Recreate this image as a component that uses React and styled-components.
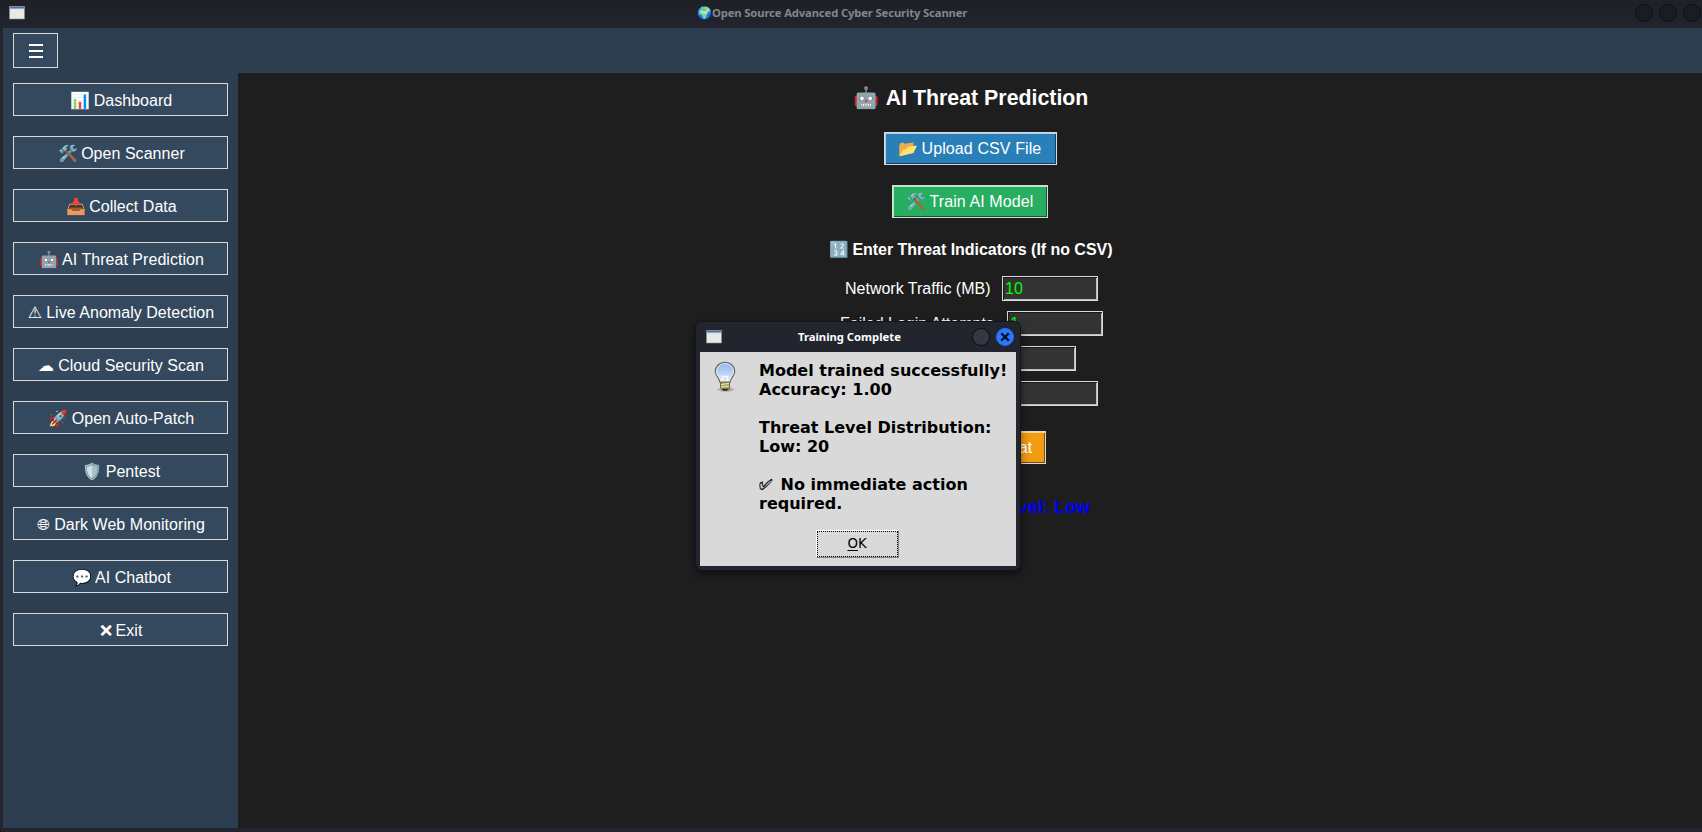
import React from "react";
import styled, { createGlobalStyle } from "styled-components";

const Global = createGlobalStyle`
  * { box-sizing: border-box; }
  html, body { margin: 0; background: #15161b; }
  body { font-family: "Liberation Sans", Arial, "DejaVu Sans", sans-serif; font-size: 16px; color: #fff; overflow: hidden; }
`;

const Window = styled.div`
  position: relative;
  width: 1702px;
  height: 832px;
  display: flex;
  flex-direction: column;
  padding: 0 0 4px 3px;
  background: #23252e;
  border-bottom-left-radius: 4px;
`;

const TitleBar = styled.header`
  display: grid;
  grid-template-columns: ${(p) => p.$lead}px auto 1fr;
  align-items: center;
  height: ${(p) => p.$height}px;
  margin-left: ${(p) => p.$shift || 0}px;
  padding: ${(p) => p.$pad};
  background: ${(p) => p.$bg};
  flex: none;
`;

const TitleText = styled.span`
  font: 700 11.25px/16px "Noto Sans", "Open Sans", sans-serif;
  color: ${(p) => p.$color};
  letter-spacing: ${(p) => p.$spacing}px;
  white-space: pre;
  display: flex;
  align-items: center;
`;

const Emoji = styled.span`
  font: ${(p) => p.$size}px/1 "Noto Color Emoji", sans-serif;
  letter-spacing: 0;
`;

const Controls = styled.div`
  display: flex;
  justify-content: flex-end;
  gap: 6px;
`;

const Round = styled.span`
  width: 18px;
  height: 18px;
  border-radius: 50%;
  border: 1px solid ${(p) => p.$ring};
  background: ${(p) => p.$bg};
  display: flex;
  align-items: center;
  justify-content: center;
`;

const Toolbar = styled.div`
  height: 45px;
  padding: 5px 10px;
  background: #2c3e50;
  flex: none;
`;

const MenuButton = styled.button`
  display: flex;
  align-items: center;
  justify-content: center;
  width: 45px;
  height: 35px;
  padding: 1px 0 0 1px;
  border: 1px solid #d9d9d9;
  background: #34495e;
`;

const Body = styled.div`
  display: flex;
  flex: 1;
`;

const Sidebar = styled.nav`
  width: 235px;
  padding: 10px;
  display: flex;
  flex-direction: column;
  gap: 20px;
  background: #2c3e50;
`;

const NavButton = styled.button`
  height: 33px;
  padding: 2px 0 0 ${(p) => (p.$mono ? 1 : 2)}px;
  display: flex;
  align-items: center;
  justify-content: center;
  gap: ${(p) => (p.$mono ? 4 : 3)}px;
  border: 1px solid #d9d9d9;
  background: #34495e;
  color: #fff;
  font: 16px/19px "Liberation Sans", sans-serif;
  letter-spacing: 0.04px;
  white-space: nowrap;
`;

const Glyph = styled.span`
  font: 16px/18px "DejaVu Sans", sans-serif;
`;

const Main = styled.main`
  flex: 1;
  display: flex;
  flex-direction: column;
  align-items: center;
  background: #1e1e1e;
`;

const Heading = styled.h1`
  margin: 13px 0 0;
  height: 24px;
  padding-left: 2px;
  display: flex;
  align-items: center;
  gap: 6px;
  font: bold 21.33px/24px "Liberation Sans", sans-serif;
`;

const ActionButton = styled.button`
  width: ${(p) => p.$width}px;
  height: 33px;
  margin-top: ${(p) => p.$top}px;
  padding: 0;
  display: flex;
  align-items: center;
  justify-content: center;
  gap: 3px;
  border: 1px solid #d9d9d9;
  background: ${(p) => p.$bg};
  box-shadow: inset 1px 1px 0 ${(p) => p.$light}, inset -1px -1px 0 ${(p) => p.$dark};
  color: #fff;
  font: 16px/18px "Liberation Sans", sans-serif;
  letter-spacing: 0.1px;
  white-space: nowrap;
`;

const Subheading = styled.h2`
  margin: 22px 0 16px;
  height: 20px;
  padding-left: 2px;
  display: flex;
  align-items: center;
  gap: 3px;
  font: bold 16px/20px "Liberation Sans", sans-serif;
  letter-spacing: -0.04px;
`;

const Fields = styled.div`
  display: flex;
  flex-direction: column;
  align-items: center;
  gap: 10px;
`;

const Field = styled.label`
  display: flex;
  align-items: center;
  height: 25px;
  width: ${(p) => p.$width}px;
  padding-left: 3px;
  justify-content: space-between;
  white-space: nowrap;
`;

const Input = styled.input`
  width: 96px;
  height: 25px;
  padding: 1px 0 0 2px;
  border: 1px solid #d9d9d9;
  box-shadow: inset 1px 1px 0 #1a1a1a, inset -1px -1px 0 #bdbdbd;
  border-radius: 0;
  outline: none;
  background: #333;
  color: #00ff00;
  font: 16px/18px "Liberation Sans", sans-serif;
`;

const Result = styled.p`
  margin: 33px 0 0;
  font: bold 18px/20px "Liberation Sans", sans-serif;
  color: #0000ff;
`;

const Dialog = styled.section`
  position: absolute;
  left: 696px;
  top: 322px;
  width: 324px;
  height: 248px;
  padding: 0 4px 4px;
  display: flex;
  flex-direction: column;
  border-radius: 6px;
  background: #23252e;
  box-shadow: 0 0 0 1px #14151a, 0 3px 10px rgba(0, 0, 0, 0.6);
`;

const DialogBody = styled.div`
  flex: 1;
  background: #d9d9d9;
  color: #000;
  display: flex;
  flex-direction: column;
  align-items: center;
`;

const Message = styled.div`
  align-self: stretch;
  display: flex;
  padding: 9px 0 0 9px;
  height: 178px;
`;

const Lines = styled.div`
  margin-left: 18px;
  font: bold 16px/19px "DejaVu Sans", sans-serif;
  white-space: pre;
`;

const Check = styled.span`
  margin-right: 2px;
  font-weight: normal;
  -webkit-text-stroke: 0.3px #000;
`;

const OkButton = styled.button`
  width: 83px;
  height: 28px;
  margin-right: 2px;
  padding: 0;
  border: 1px solid;
  border-color: #fff #828282 #828282 #fff;
  background: #d9d9d9;
  outline: 1px dotted #000;
  outline-offset: -2px;
  color: #000;
  font: 13.33px/16px "DejaVu Sans", sans-serif;

  u {
    text-underline-offset: 2px;
  }
`;

const WindowIcon = () => (
  <svg width="16" height="14" viewBox="0 0 16 14">
    <rect x="0.5" y="0.5" width="15" height="12.5" fill="#e9eae6" stroke="#8b8d8c" strokeWidth="0.6" />
    <rect x="1" y="1" width="14" height="2" fill="#4a74a8" />
    <rect x="1" y="2.4" width="14" height="0.8" fill="#b7c9de" />
  </svg>
);

const MenuIcon = () => (
  <svg width="14" height="14" viewBox="0 0 14 14">
    <path d="M0 1h14M0 7h14M0 13h14" stroke="#fff" strokeWidth="1.8" />
  </svg>
);

const BulbIcon = () => (
  <svg width="32" height="32" viewBox="0 0 32 32">
    <defs>
      <linearGradient id="glass" x1="0" y1="0" x2="0" y2="1">
        <stop offset="0" stopColor="#8fb4e8" />
        <stop offset="0.55" stopColor="#bcd2f0" />
        <stop offset="1" stopColor="#eef1f4" />
      </linearGradient>
      <radialGradient id="shade">
        <stop offset="0" stopColor="#000" stopOpacity="0.5" />
        <stop offset="1" stopColor="#000" stopOpacity="0" />
      </radialGradient>
    </defs>
    <ellipse cx="17" cy="28.5" rx="10" ry="2.8" fill="url(#shade)" />
    <path d="M16 1.3c-5.7 0-9.7 4.200-9.700 9.200 0 4.500 4.300 6.500 4.800 11h9.800c.5-4.500 4.800-6.500 4.800-11 0-5-4-9.200-9.700-9.200z" fill="url(#glass)" stroke="#5f6368" strokeWidth="1.200" />
    <path d="M16 2.500c-5 0-8.500 3.600-8.500 8 0 4 4 6 4.700 10.500h7.600c.7-4.500 4.700-6.500 4.700-10.500 0-4.400-3.500-8-8.500-8z" fill="none" stroke="#edf4ff" strokeWidth="0.900" />
    <path d="M14 20.500l-1-6 2 2 1-2 1 2 2-2-1 6" fill="none" stroke="#fff" strokeWidth="0.900" />
    <path d="M11.500 21h9v5.500l-2 2.500h-5l-2-2.500z" fill="#a49f58" stroke="#5d5a3c" strokeWidth="0.900" />
    <path d="M12 23.500l8-1M12 26l8-1" stroke="#f2efbd" />
    <path d="M13 27.700h6l-1 1.900h-4z" fill="#222" />
  </svg>
);

const nav = [
  ["📊", "Dashboard"],
  ["🛠️", "Open Scanner"],
  ["📥", "Collect Data"],
  ["🤖", "AI Threat Prediction"],
  ["⚠", "Live Anomaly Detection", true],
  ["☁", "Cloud Security Scan", true],
  ["🚀", "Open Auto-Patch"],
  ["🛡️", "Pentest"],
  ["🌐︎", "Dark Web Monitoring", true],
  ["💬", "AI Chatbot"],
  ["❌︎", "Exit", true],
];

const fields = [
  ["Network Traffic (MB)", "10", 256],
  ["Failed Login Attempts", "1", 266],
  ["CPU Usage %", "", 212],
  ["Unusual File Access", "", 256],
];

export default function App() {
  return (
    <>
      <Global />
      <Window>
        <TitleBar $lead={688} $height={28} $shift={-3} $pad="0 1px 2px 9px" $bg="linear-gradient(#1e2028, #23252e)">
          <WindowIcon />
          <TitleText $color="#85868a" $spacing={-0.13}>
            <Emoji $size={12}>🌍</Emoji>Open Source Advanced Cyber Security Scanner
          </TitleText>
          <Controls>
            <Round $ring="#101116" $bg="#1b1c21" />
            <Round $ring="#101116" $bg="#1b1c21" />
            <Round $ring="#101116" $bg="#1b1c21" />
          </Controls>
        </TitleBar>
        <Toolbar>
          <MenuButton aria-label="Menu"><MenuIcon /></MenuButton>
        </Toolbar>
        <Body>
          <Sidebar>
            {nav.map(([icon, label, mono]) => (
              <NavButton key={label} $mono={mono}>
                {mono ? <Glyph>{icon}</Glyph> : <Emoji $size={16}>{icon}</Emoji>}
                {label}
              </NavButton>
            ))}
          </Sidebar>
          <Main>
            <Heading><Emoji $size={21}>🤖</Emoji>AI Threat Prediction</Heading>
            <ActionButton $width={173} $top={22} $bg="#2980b9" $light="#a9d3f5" $dark="#14405d">
              <Emoji $size={16}>📂</Emoji>Upload CSV File
            </ActionButton>
            <ActionButton $width={156} $top={20} $bg="#27ae60" $light="#a2f0c2" $dark="#135730">
              <Emoji $size={16}>🛠️</Emoji>Train AI Model
            </ActionButton>
            <Subheading><Emoji $size={16}>🔢</Emoji>Enter Threat Indicators (If no CSV)</Subheading>
            <Fields>
              {fields.map(([label, value, width]) => (
                <Field key={label} $width={width}>
                  {label}
                  <Input defaultValue={value} />
                </Field>
              ))}
            </Fields>
            <ActionButton $width={152} $top={25} $bg="#f39c12" $light="#ffd48a" $dark="#7a4e09">
              <Emoji $size={16}>🔍</Emoji>Predict Threat
            </ActionButton>
            <Result>Predicted Threat Level: Low</Result>
          </Main>
        </Body>
        <Dialog>
          <TitleBar $lead={92} $height={30} $pad="0 2px 0 6px" $bg="transparent">
            <WindowIcon />
            <TitleText $color="#fff" $spacing={0}>Training Complete</TitleText>
            <Controls>
              <Round $ring="#0b0c0f" $bg="#353843" />
              <Round $ring="#2470f5" $bg="#2777ff">
                <svg width="10" height="10" viewBox="0 0 10 10">
                  <path d="M1.200 1.200l7.600 7.600M8.800 1.200l-7.600 7.600" stroke="#0d1020" strokeWidth="2.300" />
                </svg>
              </Round>
            </Controls>
          </TitleBar>
          <DialogBody>
            <Message>
              <BulbIcon />
              <Lines>
                {"Model trained successfully!\nAccuracy: 1.00\n\nThreat Level Distribution:\nLow: 20\n\n"}
                <Check>✅︎</Check>{" No immediate action\nrequired."}
              </Lines>
            </Message>
            <OkButton><u>O</u>K</OkButton>
          </DialogBody>
        </Dialog>
      </Window>
    </>
  );
}
